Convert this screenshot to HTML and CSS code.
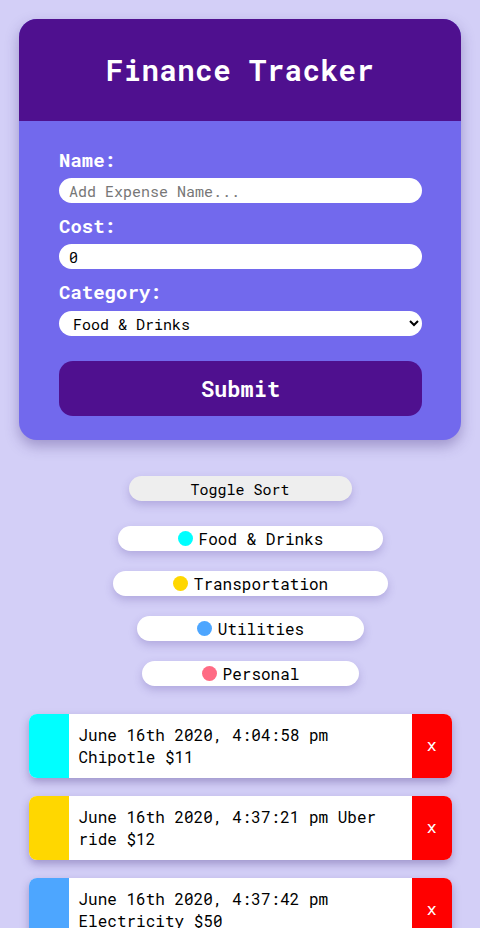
FILE: index.html
```html
<!DOCTYPE html>
<html lang="en">
<head>
<meta charset="utf-8">
<title>Finance Tracker</title>
<link rel="stylesheet" href="styles.css">
</head>
<body>
<main class="page">
  <section class="card">
    <header class="card-header">
      <h1 class="title">Finance Tracker</h1>
    </header>
    <form class="form">
      <div class="field">
        <label class="label" for="name">Name:</label>
        <input class="input" id="name" type="text" placeholder="Add Expense Name...">
      </div>
      <div class="field">
        <label class="label" for="cost">Cost:</label>
        <input class="input" id="cost" type="text" value="0">
      </div>
      <div class="field">
        <label class="label" for="cat">Category:</label>
        <select class="input select" id="cat">
          <option>Food &amp; Drinks</option>
          <option>Transportation</option>
          <option>Utilities</option>
          <option>Personal</option>
        </select>
      </div>
      <button class="submit" type="button">Submit</button>
    </form>
  </section>

  <div class="controls">
    <button class="pill toggle" type="button">Toggle Sort</button>
  </div>

  <div class="filters">
    <button class="pill filter" type="button"><span class="dot food"></span>Food &amp; Drinks</button>
    <button class="pill filter" type="button"><span class="dot transport"></span>Transportation</button>
    <button class="pill filter" type="button"><span class="dot util"></span>Utilities</button>
    <button class="pill filter" type="button"><span class="dot personal"></span>Personal</button>
  </div>

  <ul class="list">
    <li class="item">
      <span class="bar food"></span>
      <p class="item-text">June 16th 2020, 4:04:58 pm Chipotle $11</p>
      <button class="del" type="button">x</button>
    </li>
    <li class="item">
      <span class="bar transport"></span>
      <p class="item-text">June 16th 2020, 4:37:21 pm Uber ride $12</p>
      <button class="del" type="button">x</button>
    </li>
    <li class="item">
      <span class="bar util"></span>
      <p class="item-text">June 16th 2020, 4:37:42 pm Electricity $50</p>
      <button class="del" type="button">x</button>
    </li>
  </ul>
</main>
</body>
</html>
```

FILE: styles.css
```css
* { box-sizing: border-box; }

html, body {
  margin: 0;
  padding: 0;
  background: #d3cff7;
}

body {
  font-family: "Roboto Mono", "DejaVu Sans Mono", monospace;
  color: #000;
}

.page {
  padding-top: 19px;
  padding-bottom: 40px;
}

.card {
  width: 442px;
  margin: 0 auto;
  border-radius: 18px;
  overflow: hidden;
  background: #7269ed;
  box-shadow: 0 6px 14px rgba(60, 40, 120, 0.35);
}

.card-header {
  background: #4f108f;
  height: 102px;
  display: flex;
  align-items: center;
  justify-content: center;
}

.title {
  margin: 0;
  color: #fff;
  font-size: 29px;
  font-weight: bold;
  letter-spacing: 0.5px;
}

.form {
  padding: 27px 39px 24px 40px;
  display: flex;
  flex-direction: column;
}

.field {
  display: flex;
  flex-direction: column;
  gap: 6px;
  margin-bottom: 11px;
}

.label {
  color: #fff;
  font-size: 19px;
  font-weight: bold;
  line-height: 24px;
}

.input {
  font-family: inherit;
  height: 25px;
  border: none;
  border-radius: 13px;
  background: #fff;
  padding: 0 10px;
  font-size: 15px;
  color: #000;
  outline: none;
}

.input::placeholder {
  color: #777;
}

.select {
  padding: 0 10px;
  margin-top: 1px;
}

.submit {
  margin-top: 14px;
  height: 55px;
  border: none;
  border-radius: 14px;
  background: #4f108f;
  color: #fff;
  font-family: inherit;
  font-size: 22px;
  font-weight: bold;
}

.controls {
  display: flex;
  justify-content: center;
  margin-top: 36px;
}

.pill {
  font-family: inherit;
  height: 25px;
  border: none;
  border-radius: 13px;
  background: #fff;
  color: #000;
  font-size: 16px;
  padding: 0 60px;
  display: inline-flex;
  align-items: center;
  justify-content: center;
  box-shadow: 0 4px 8px rgba(80, 60, 150, 0.25);
}

.toggle {
  background: #eeeeee;
  font-size: 15px;
  width: 223px;
  padding: 0;
}

.filter {
  margin-left: 21px;
}

.filters {
  margin-top: 25px;
  display: flex;
  flex-direction: column;
  align-items: center;
  gap: 20px;
}

.dot {
  width: 15px;
  height: 15px;
  border-radius: 50%;
  margin-right: 6px;
  flex: none;
}

.food { background: #00ffff; }
.transport { background: #ffd700; }
.util { background: #4da6ff; }
.personal { background: #ff6b84; }

.list {
  list-style: none;
  margin: 28px 0 0;
  padding: 0;
  display: flex;
  flex-direction: column;
  align-items: center;
  gap: 18px;
}

.item {
  width: 423px;
  display: flex;
  align-items: stretch;
  background: #fff;
  border-radius: 8px;
  overflow: hidden;
  box-shadow: 0 4px 8px rgba(60, 40, 120, 0.35);
}

.bar {
  width: 40px;
  flex: none;
}

.item-text {
  flex: 1;
  margin: 0;
  padding: 10px;
  font-size: 16px;
  line-height: 22px;
}

.del {
  width: 40px;
  flex: none;
  border: none;
  background: #ff0000;
  color: #fff;
  font-family: inherit;
  font-size: 17px;
  padding: 0 0 3px;
}
```
